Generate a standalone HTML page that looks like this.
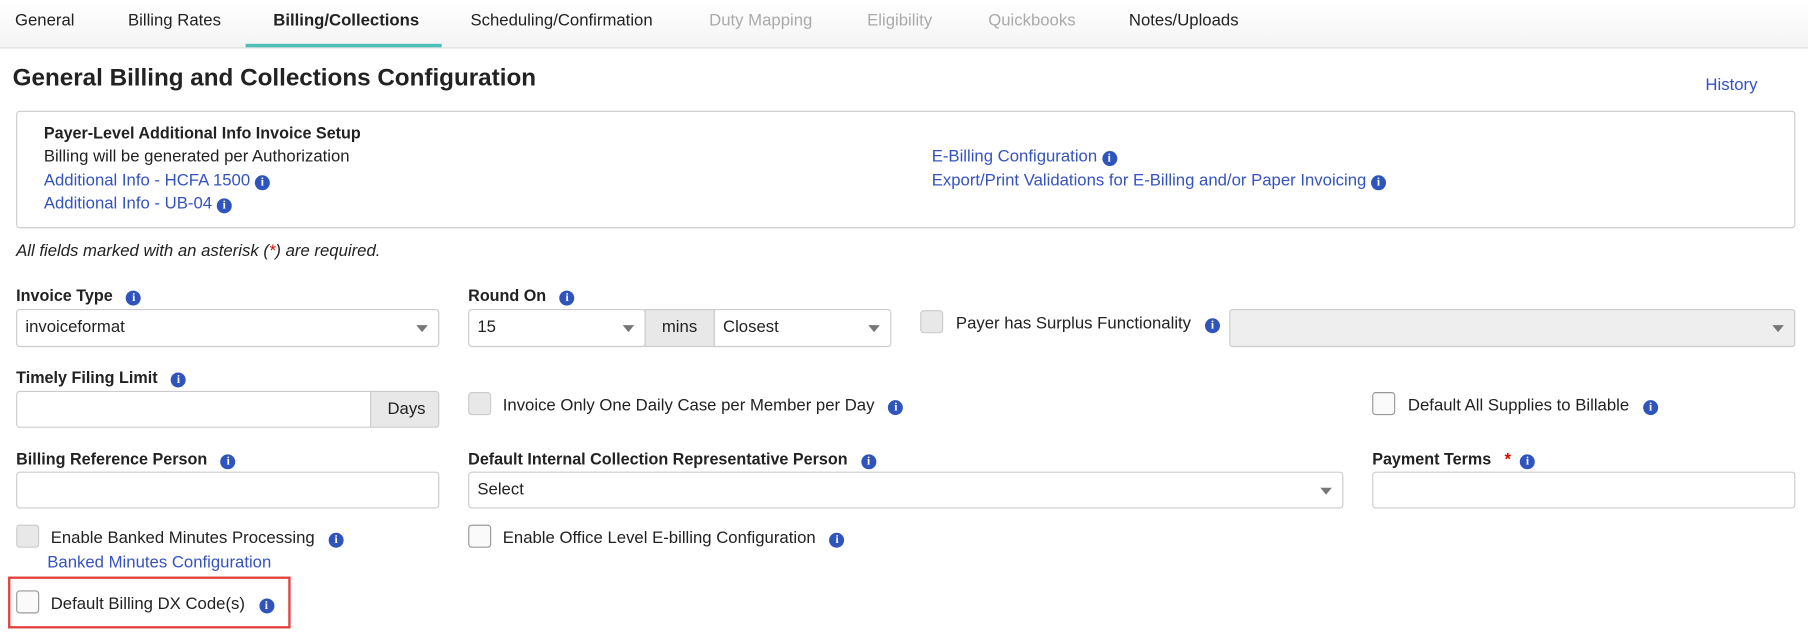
<!DOCTYPE html>
<html><head><meta charset="utf-8"><style>
html,body{margin:0;padding:0;background:#fff;overflow:hidden;width:1808px;height:639px}
#w{position:absolute;left:0;top:0;width:1568px;height:554px;transform:scale(1.1531);transform-origin:0 0;font-family:"Liberation Sans",sans-serif;font-size:14.5px;color:#222}
.a{position:absolute;white-space:nowrap;margin-top:1px}
.tabs{position:absolute;left:0;top:0;width:1568px;height:41px;background:linear-gradient(#fff,#f4f4f4);border-bottom:1px solid #ddd}
.t{position:absolute;top:10px;font-size:14.5px;color:#222}
.g{color:#aaa}
.lk{color:#3553c0}
.b{font-weight:bold;font-size:14px}
.i{display:inline-block;width:13px;height:13px;border-radius:50%;background:#2f55bd;color:#fff;font-size:10px;font-weight:bold;line-height:13px;text-align:center;font-family:"Liberation Serif",serif;vertical-align:0px}
.box{position:absolute;border:1px solid #ccc;border-radius:3px;box-sizing:border-box;background:#fff}
.sel::after{content:"";position:absolute;right:9px;top:13px;border-left:5px solid transparent;border-right:5px solid transparent;border-top:6px solid #777}
.cb{position:absolute;width:20px;height:20px;border:1px solid #999;border-radius:3px;box-sizing:border-box;background:#fafafa}
.cbd{border-color:#ccc;background:#e8e8e8}
.v{position:absolute;left:7px;top:7px}
</style></head><body><div id="w">
<div class="tabs">
<span class="t" style="left:13px">General</span>
<span class="t" style="left:111px">Billing Rates</span>
<span class="t" style="left:237px;font-weight:bold">Billing/Collections</span>
<span class="t" style="left:408px">Scheduling/Confirmation</span>
<span class="t g" style="left:615px">Duty Mapping</span>
<span class="t g" style="left:752px">Eligibility</span>
<span class="t g" style="left:857px">Quickbooks</span>
<span class="t" style="left:979px">Notes/Uploads</span>
<div style="position:absolute;left:213px;width:170px;top:38px;height:3px;background:#4cbfb6"></div>
</div>
<div class="a" style="left:11px;top:55px;font-size:21px;font-weight:bold">General Billing and Collections Configuration</div>
<div class="a lk" style="left:1479px;top:65px">History</div>
<div class="box" style="left:14px;top:96px;width:1543px;height:102px"></div>
<div class="a b" style="left:38px;top:106px">Payer-Level Additional Info Invoice Setup</div>
<div class="a" style="left:38px;top:127px">Billing will be generated per Authorization</div>
<div class="a lk" style="left:38px;top:148px">Additional Info - HCFA 1500 <span class="i">i</span></div>
<div class="a lk" style="left:38px;top:168px">Additional Info - UB-04 <span class="i">i</span></div>
<div class="a lk" style="left:808px;top:127px">E-Billing Configuration <span class="i">i</span></div>
<div class="a lk" style="left:808px;top:148px">Export/Print Validations for E-Billing and/or Paper Invoicing <span class="i">i</span></div>
<div class="a" style="left:14px;top:209px;font-style:italic">All fields marked with an asterisk (<span style="color:#d00">*</span>) are required.</div>

<div class="a b" style="left:14px;top:247px">Invoice Type &nbsp; <span class="i">i</span></div>
<div class="a b" style="left:406px;top:247px">Round On &nbsp; <span class="i">i</span></div>
<div class="box sel" style="left:14px;top:268px;width:367px;height:33px"><span class="v">invoiceformat</span></div>
<div class="box sel" style="left:406px;top:268px;width:154px;height:33px"><span class="v">15</span></div>
<div class="box" style="left:559px;top:268px;width:61px;height:33px;background:#e8e8e8;border-radius:0"><span class="v" style="left:14px">mins</span></div>
<div class="box sel" style="left:619px;top:268px;width:154px;height:33px;border-radius:0 3px 3px 0"><span class="v">Closest</span></div>
<div class="cb cbd" style="left:798px;top:269px"></div>
<div class="a" style="left:829px;top:272px">Payer has Surplus Functionality &nbsp; <span class="i">i</span></div>
<div class="box sel" style="left:1066px;top:268px;width:491px;height:33px;background:#eee"></div>

<div class="a b" style="left:14px;top:318px">Timely Filing Limit &nbsp; <span class="i">i</span></div>
<div class="box" style="left:14px;top:339px;width:308px;height:32px;border-radius:3px 0 0 3px"></div>
<div class="box" style="left:321px;top:339px;width:60px;height:32px;background:#e8e8e8;border-radius:0 3px 3px 0"><span class="v" style="left:14px">Days</span></div>
<div class="cb cbd" style="left:406px;top:340px"></div>
<div class="a" style="left:436px;top:343px">Invoice Only One Daily Case per Member per Day &nbsp; <span class="i">i</span></div>
<div class="cb" style="left:1190px;top:340px"></div>
<div class="a" style="left:1221px;top:343px">Default All Supplies to Billable &nbsp; <span class="i">i</span></div>

<div class="a b" style="left:14px;top:389px">Billing Reference Person &nbsp; <span class="i">i</span></div>
<div class="a b" style="left:406px;top:389px">Default Internal Collection Representative Person &nbsp; <span class="i">i</span></div>
<div class="a b" style="left:1190px;top:389px">Payment Terms &nbsp; <span style="color:#d00">*</span> &nbsp;<span class="i">i</span></div>
<div class="box" style="left:14px;top:409px;width:367px;height:32px"></div>
<div class="box sel" style="left:406px;top:409px;width:759px;height:32px"><span class="v">Select</span></div>
<div class="box" style="left:1190px;top:409px;width:367px;height:32px"></div>

<div class="cb cbd" style="left:14px;top:455px"></div>
<div class="a" style="left:44px;top:458px">Enable Banked Minutes Processing &nbsp; <span class="i">i</span></div>
<div class="a lk" style="left:41px;top:479px">Banked Minutes Configuration</div>
<div class="cb" style="left:406px;top:455px"></div>
<div class="a" style="left:436px;top:458px">Enable Office Level E-billing Configuration &nbsp; <span class="i">i</span></div>

<div style="position:absolute;left:7px;top:500px;width:245px;height:45px;border:2px solid #e0403c;box-sizing:border-box"></div>
<div class="cb" style="left:14px;top:512px"></div>
<div class="a" style="left:44px;top:515px">Default Billing DX Code(s) &nbsp; <span class="i">i</span></div>
</div></body></html>
